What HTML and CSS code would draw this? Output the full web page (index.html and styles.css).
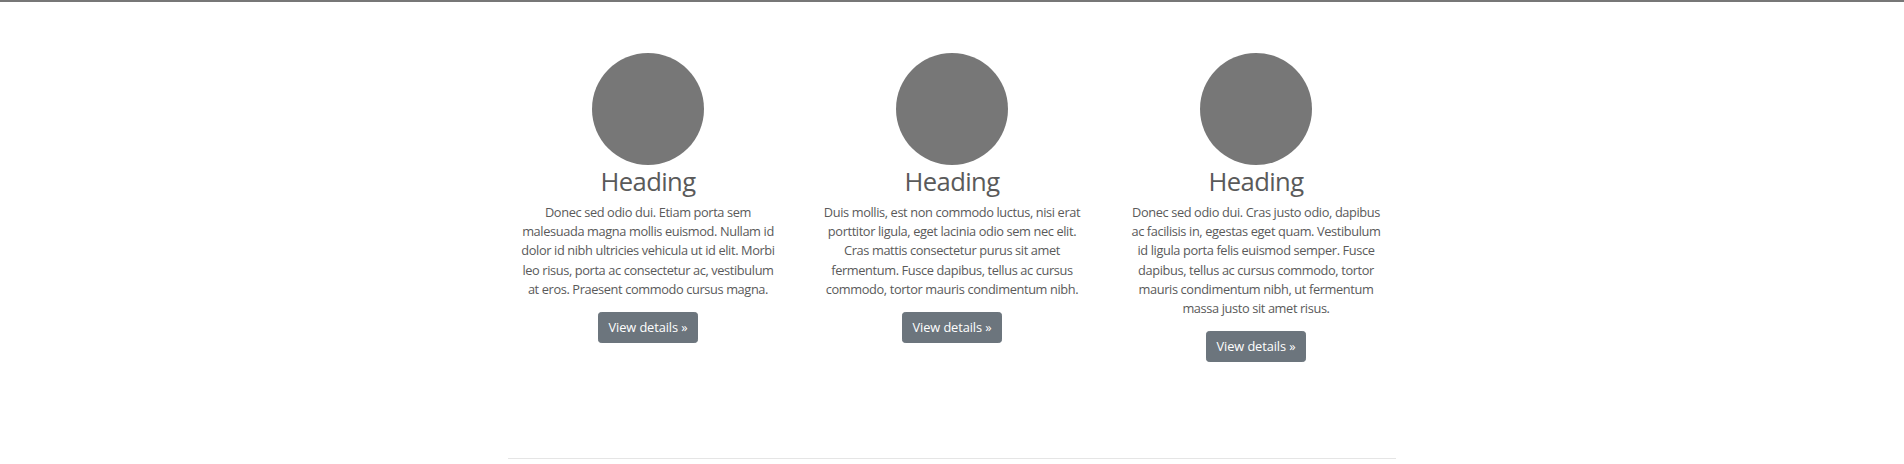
FILE: index.html
```html
<!DOCTYPE html>
<html lang="en">
<head>
<meta charset="utf-8">
<title>Marketing</title>
<link rel="stylesheet" href="styles.css">
</head>
<body>
<div class="carousel-edge"></div>
<main class="container marketing">
  <div class="row">
    <div class="col">
      <div class="avatar"></div>
      <h2>Heading</h2>
      <p>Donec sed odio dui. Etiam porta sem malesuada magna mollis euismod. Nullam id dolor id nibh ultricies vehicula ut id elit. Morbi leo risus, porta ac consectetur ac, vestibulum at eros. Praesent commodo cursus magna.</p>
      <p class="action"><a class="btn" href="#">View details &raquo;</a></p>
    </div>
    <div class="col">
      <div class="avatar"></div>
      <h2>Heading</h2>
      <p>Duis mollis, est non commodo luctus, nisi erat porttitor ligula, eget lacinia odio sem nec elit. Cras mattis consectetur purus sit amet fermentum. Fusce dapibus, tellus ac cursus commodo, tortor mauris condimentum nibh.</p>
      <p class="action"><a class="btn" href="#">View details &raquo;</a></p>
    </div>
    <div class="col">
      <div class="avatar"></div>
      <h2>Heading</h2>
      <p>Donec sed odio dui. Cras justo odio, dapibus ac facilisis in, egestas eget quam. Vestibulum id ligula porta felis euismod semper. Fusce dapibus, tellus ac cursus commodo, tortor mauris condimentum nibh, ut fermentum massa justo sit amet risus.</p>
      <p class="action"><a class="btn" href="#">View details &raquo;</a></p>
    </div>
  </div>
  <hr class="divider">
</main>
</body>
</html>
```
FILE: styles.css
```css
* { box-sizing: border-box; }
html, body { margin: 0; padding: 0; }
body {
  font-family: "Open Sans", "Liberation Sans", sans-serif;
  font-size: 12.8px;
  line-height: 1.5;
  letter-spacing: -0.38px;
  color: #5a5a5a;
  background: #fff;
}
.carousel-edge {
  height: 2px;
  background: #777;
  margin-bottom: 51px;
}
.container {
  width: 912px;
  margin: 0 auto;
  padding: 0 12px;
}
.row {
  display: flex;
  margin: 0 -12px;
}
.col {
  flex: 0 0 304px;
  padding: 0 12px;
  text-align: center;
  margin-bottom: 19.2px;
}
.avatar {
  width: 112px;
  height: 112px;
  border-radius: 50%;
  background: #777;
  margin: 0 auto;
}
h2 {
  font-size: 25.6px;
  font-weight: 400;
  line-height: 1.2;
  letter-spacing: -0.6px;
  padding-top: 2px;
  margin: 0 0 5.4px;
}
.col p {
  margin: 0 9.6px 12.8px;
}
.col p.action {
  line-height: 0;
}
.btn {
  display: inline-block;
  color: #fff;
  background: #6c757d;
  border: 1px solid #6c757d;
  border-radius: 3.2px;
  padding: 4.8px 9.6px;
  font-size: 12.8px;
  line-height: 19.2px;
  letter-spacing: -0.1px;
  text-decoration: none;
}
.divider {
  margin: 64px 0;
  border: 0;
  border-top: 1px solid rgba(0,0,0,.1);
}
```
